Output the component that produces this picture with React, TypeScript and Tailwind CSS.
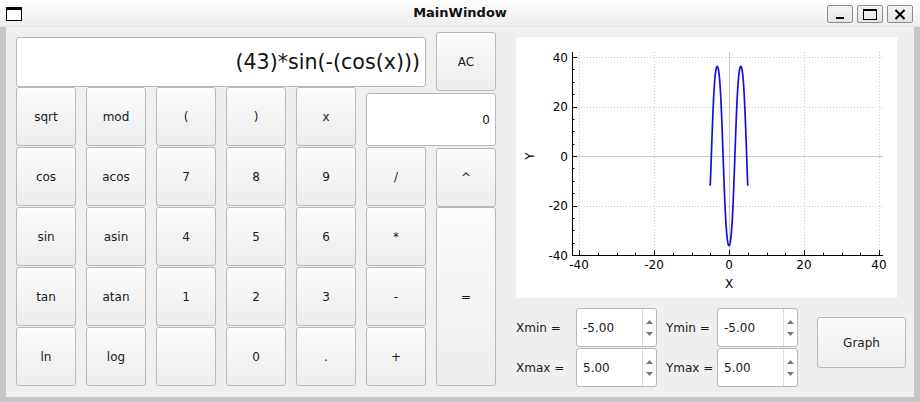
import React from "react";

const font = { fontFamily: '"DejaVu Sans", "Liberation Sans", sans-serif' };

function Btn({ label, className = "" }: { label: string; className?: string }) {
  return (
    <div
      className={
        "flex items-center justify-center rounded-[3px] border border-[#b8b8b8] bg-linear-to-b from-[#fcfcfc] to-[#ececec] text-[12px] text-[#1a1a1a] shadow-[inset_0_1px_0_#ffffff] " +
        className
      }
    >
      {label}
    </div>
  );
}

function Spin({ value }: { value: string }) {
  return (
    <div className="flex h-[39px] w-[81px] rounded-[3px] border border-[#b8b8b8] bg-white">
      <div className="flex flex-1 items-center pl-[6px] text-[12px] text-[#1a1a1a]">{value}</div>
      <div className="flex w-[14px] flex-col items-center justify-center gap-[8px] border-l border-[#dcdcdc]">
        <svg width="7" height="4" viewBox="0 0 7 4">
          <path d="M0 4 L3.5 0 L7 4 Z" fill="#777777" />
        </svg>
        <svg width="7" height="4" viewBox="0 0 7 4">
          <path d="M0 0 L7 0 L3.5 4 Z" fill="#777777" />
        </svg>
      </div>
    </div>
  );
}

function Plot() {
  const X = (v: number) => 213 + 3.75 * v;
  const Y = (v: number) => 119 - 2.475 * v;
  const majors = [-40, -20, 0, 20, 40];
  const minors: number[] = [];
  for (let v = -40; v <= 40; v += 5) if (v % 20 !== 0) minors.push(v);
  const pts: string[] = [];
  for (let i = 0; i <= 400; i++) {
    const x = -5 + (10 * i) / 400;
    const y = 43 * Math.sin(-Math.cos(x));
    pts.push(`${X(x).toFixed(2)},${Y(y).toFixed(2)}`);
  }
  return (
    <svg width="381" height="261" viewBox="0 0 381 261" className="block bg-white" style={font}>
      {majors.map((v) =>
        v === 0 ? null : (
          <line key={"gx" + v} x1={Math.round(X(v)) + 0.5} x2={Math.round(X(v)) + 0.5} y1={15} y2={218} stroke="#c8c8c8" strokeWidth="1" strokeDasharray="1 2" />
        )
      )}
      {majors.map((v) =>
        v === 0 || v === -40 ? null : (
          <line key={"gy" + v} x1={56} x2={367} y1={Math.round(Y(v)) + 0.5} y2={Math.round(Y(v)) + 0.5} stroke="#c8c8c8" strokeWidth="1" strokeDasharray="1 2" />
        )
      )}
      <line x1={X(0) + 0.5} x2={X(0) + 0.5} y1={15} y2={218} stroke="#c8c8c8" strokeWidth="1" />
      <line x1={56} x2={367} y1={Y(0) + 0.5} y2={Y(0) + 0.5} stroke="#c8c8c8" strokeWidth="1" />
      <polyline points={pts.join(" ")} fill="none" stroke="#1212d6" strokeWidth="1.7" strokeLinejoin="round" />
      <line x1={56.5} x2={56.5} y1={15} y2={219} stroke="#000" strokeWidth="1" />
      <line x1={56} x2={367} y1={218.5} y2={218.5} stroke="#000" strokeWidth="1" />
      {majors.map((v) => (
        <line key={"ty" + v} x1={56} x2={61} y1={Math.round(Y(v)) + 0.5} y2={Math.round(Y(v)) + 0.5} stroke="#000" />
      ))}
      {minors.map((v) => (
        <line key={"my" + v} x1={56} x2={58.5} y1={Math.round(Y(v)) + 0.5} y2={Math.round(Y(v)) + 0.5} stroke="#000" />
      ))}
      {majors.map((v) => (
        <line key={"tx" + v} x1={Math.round(X(v)) + 0.5} x2={Math.round(X(v)) + 0.5} y1={213} y2={218} stroke="#000" />
      ))}
      {minors.map((v) => (
        <line key={"mx" + v} x1={Math.round(X(v)) + 0.5} x2={Math.round(X(v)) + 0.5} y1={215.5} y2={218} stroke="#000" />
      ))}
      {majors.map((v) => (
        <text key={"ly" + v} x={52} y={Y(v) + 4.5} fontSize="12" textAnchor="end" fill="#000">
          {v}
        </text>
      ))}
      {majors.map((v) => (
        <text key={"lx" + v} x={X(v)} y={232} fontSize="12" textAnchor="middle" fill="#000">
          {v}
        </text>
      ))}
      <text x={213} y={251} fontSize="12" textAnchor="middle" fill="#000">
        X
      </text>
      <text x={0} y={0} fontSize="12" textAnchor="middle" fill="#000" transform="translate(18 119) rotate(-90)">
        Y
      </text>
    </svg>
  );
}

export default function App() {
  return (
    <div className="flex h-[402px] w-[920px] flex-col overflow-hidden bg-[#efefef] text-black" style={font}>
      <div className="relative flex h-[27px] items-center justify-center border-b border-[#e2e2e2] bg-linear-to-b from-[#ffffff] to-[#ededed]">
        <div className="absolute left-[6px] top-[7px]">
          <svg width="16" height="14" viewBox="0 0 16 14">
            <rect x="0.5" y="0.5" width="15" height="13" fill="#fff" stroke="#000" />
            <rect x="0" y="0" width="16" height="3" fill="#000" />
          </svg>
        </div>
        <span className="text-[13px] font-bold text-[#111]">MainWindow</span>
        <div className="absolute right-[7px] top-[5px] flex gap-[4px]">
          <div className="flex h-[18px] w-[26px] items-center justify-center rounded-[2px] border border-[#8c8c8c] bg-linear-to-b from-[#f6f6f6] to-[#e4e4e4]">
            <svg width="12" height="10" viewBox="0 0 12 10">
              <rect x="2" y="8" width="8" height="2" fill="#000" />
            </svg>
          </div>
          <div className="flex h-[18px] w-[26px] items-center justify-center rounded-[2px] border border-[#8c8c8c] bg-linear-to-b from-[#f6f6f6] to-[#e4e4e4]">
            <svg width="14" height="11" viewBox="0 0 14 11">
              <rect x="0.5" y="0.5" width="13" height="10" fill="none" stroke="#000" />
              <rect x="0" y="0" width="14" height="2" fill="#000" />
            </svg>
          </div>
          <div className="flex h-[18px] w-[26px] items-center justify-center rounded-[2px] border border-[#8c8c8c] bg-linear-to-b from-[#f6f6f6] to-[#e4e4e4]">
            <svg width="12" height="11" viewBox="0 0 12 11">
              <path d="M1.5 1 L10.5 10 M10.5 1 L1.5 10" stroke="#000" strokeWidth="2" />
            </svg>
          </div>
        </div>
      </div>

      <div className="flex flex-1 border-x-[6px] border-b-[5px] border-[#c6c6c6] bg-[#efefef]">
        <div className="flex pl-[10px] pt-[5px]">
          <div className="grid grid-cols-[repeat(7,60px)] grid-rows-[55px_repeat(5,60px)] gap-x-[10px]">
            <div className="col-span-6 mt-[5px] flex h-[50px] items-center justify-end rounded-[3px] border border-[#b8b8b8] bg-white pr-[5px] text-[20.6px] text-[#111]">
              (43)*sin(-(cos(x)))
            </div>
            <Btn label="AC" className="h-[59px] self-start" />

            <Btn label="sqrt" className="h-[59px]" />
            <Btn label="mod" className="h-[59px]" />
            <Btn label="(" className="h-[59px]" />
            <Btn label=")" className="h-[59px]" />
            <Btn label="x" className="h-[59px]" />
            <div className="col-span-2 mt-[6px] flex h-[53px] items-center justify-end rounded-[3px] border border-[#b8b8b8] bg-white pr-[5px] text-[12px] text-[#111]">
              0
            </div>

            <Btn label="cos" className="h-[59px]" />
            <Btn label="acos" className="h-[59px]" />
            <Btn label="7" className="h-[59px]" />
            <Btn label="8" className="h-[59px]" />
            <Btn label="9" className="h-[59px]" />
            <Btn label="/" className="h-[59px]" />
            <Btn label="^" className="mt-px h-[59px]" />

            <Btn label="sin" className="h-[59px]" />
            <Btn label="asin" className="h-[59px]" />
            <Btn label="4" className="h-[59px]" />
            <Btn label="5" className="h-[59px]" />
            <Btn label="6" className="h-[59px]" />
            <Btn label="*" className="h-[59px]" />
            <Btn label="=" className="row-span-3 h-[179px]" />

            <Btn label="tan" className="h-[59px]" />
            <Btn label="atan" className="h-[59px]" />
            <Btn label="1" className="h-[59px]" />
            <Btn label="2" className="h-[59px]" />
            <Btn label="3" className="h-[59px]" />
            <Btn label="-" className="h-[59px]" />

            <Btn label="ln" className="h-[59px]" />
            <Btn label="log" className="h-[59px]" />
            <Btn label="" className="h-[59px]" />
            <Btn label="0" className="h-[59px]" />
            <Btn label="." className="h-[59px]" />
            <Btn label="+" className="h-[59px]" />
          </div>

          <div className="ml-[20px] flex w-[390px] flex-col pt-[5px]">
            <Plot />
            <div className="mt-[10px] flex">
              <div className="flex flex-col gap-px">
                <div className="flex items-center">
                  <span className="w-[60px] text-[12px] text-[#1a1a1a]">Xmin =</span>
                  <Spin value="-5.00" />
                  <span className="ml-[9px] w-[51px] text-[12px] text-[#1a1a1a]">Ymin =</span>
                  <Spin value="-5.00" />
                </div>
                <div className="flex items-center">
                  <span className="w-[60px] text-[12px] text-[#1a1a1a]">Xmax =</span>
                  <Spin value="5.00" />
                  <span className="ml-[9px] w-[51px] text-[12px] text-[#1a1a1a]">Ymax =</span>
                  <Spin value="5.00" />
                </div>
              </div>
              <Btn label="Graph" className="ml-[19px] mt-[9px] h-[51px] w-[90px]" />
            </div>
          </div>
        </div>
      </div>
    </div>
  );
}
